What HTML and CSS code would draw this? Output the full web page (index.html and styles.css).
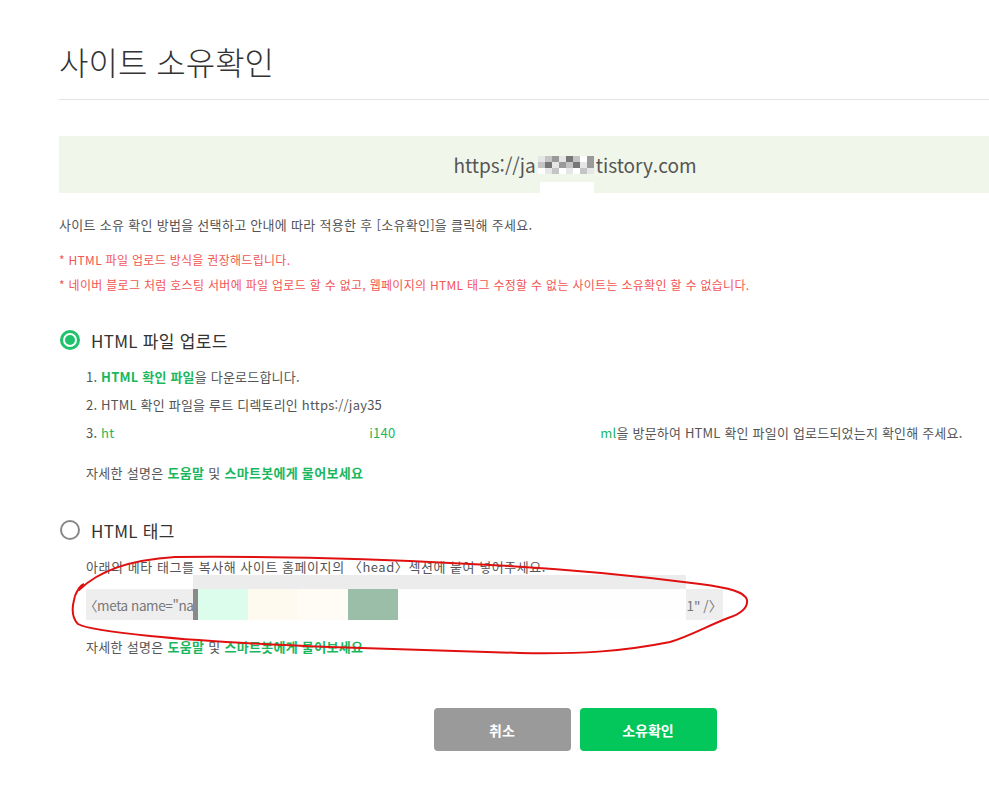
FILE: index.html
```html
<!DOCTYPE html>
<html lang="ko">
<head>
    <meta charset="UTF-8">
    <meta name="viewport" content="width=device-width, initial-scale=1.0">
    <title>사이트 소유확인</title>
    <link rel="stylesheet" href="styles.css">
</head>
<body>
    <div class="page">
        <h1 class="title">사이트 소유확인</h1>

        <div class="site-url">
            https://ja<span class="mosaic">
                <i class="c1"></i><i class="c2"></i><i class="c3"></i><i class="c1"></i><i class="c4"></i><i class="c2"></i><i class="c0"></i><i class="c3"></i>
                <i class="c2"></i><i class="c4"></i><i class="c1"></i><i class="c3"></i><i class="c2"></i><i class="c4"></i><i class="c1"></i><i class="c3"></i>
                <i class="c0"></i><i class="c1"></i><i class="c2"></i><i class="c0"></i><i class="c1"></i><i class="c0"></i><i class="c2"></i><i class="c1"></i>
            </span>tistory.com
        </div>

        <p class="guide">사이트 소유 확인 방법을 선택하고 안내에 따라 적용한 후 [소유확인]을 클릭해 주세요.</p>
        <div class="warn">
            <p>* HTML 파일 업로드 방식을 권장해드립니다.</p>
            <p>* 네이버 블로그 처럼 호스팅 서버에 파일 업로드 할 수 없고, 웹페이지의 HTML 태그 수정할 수 없는 사이트는 소유확인 할 수 없습니다.</p>
        </div>

        <div class="method">
            <label class="radio checked"><span class="dot"></span>HTML 파일 업로드</label>
            <ol class="steps">
                <li>1. <b>HTML 확인 파일</b>을 다운로드합니다.</li>
                <li>2. HTML 확인 파일을 루트 디렉토리인 https://jay35</li>
                <li>3. <em>ht</em><span class="blank w1"></span><em>i140</em><span class="blank w2"></span><em>ml</em>을 방문하여 HTML 확인 파일이 업로드되었는지 확인해 주세요.</li>
            </ol>
            <p class="help">자세한 설명은 <b>도움말</b> 및 <b>스마트봇에게 물어보세요</b></p>
        </div>

        <div class="method second">
            <label class="radio"><span class="dot"></span>HTML 태그</label>
            <p class="desc">아래의 메타 태그를 복사해 사이트 홈페이지의 〈head〉섹션에 붙여 넣어주세요.</p>
            <div class="meta-box">
                <span class="meta-start">〈meta name="na</span>
                <span class="hidden-part">
                    <i class="bar"></i><i class="mint"></i><i class="cream"></i><i class="cream2"></i><i class="sage"></i>
                </span>
                <span>1" /〉</span>
            </div>
            <p class="help">자세한 설명은 <b>도움말</b> 및 <b>스마트봇에게 물어보세요</b></p>
        </div>

        <div class="btns">
            <button class="btn cancel">취소</button>
            <button class="btn ok">소유확인</button>
        </div>

        <!-- red marker circled on the screenshot -->
        <svg class="marker" width="989" height="791" viewBox="0 0 989 791">
            <path d="M84 584 C 80 586, 77 590, 79 590 C 100 570, 130 560, 175 557 C 300 556, 400 560, 470 564 C 560 568, 640 576, 700 584 C 730 588, 745 592, 747 600 C 748 608, 740 614, 728 618 C 705 627, 690 636, 670 642 C 620 652, 580 654, 520 653 C 440 651, 380 648, 330 647 C 250 644, 190 640, 150 636 C 110 632, 85 628, 78 624 C 72 618, 72 608, 74 600 C 75 594, 77 589, 84 584" fill="none" stroke="#e01010" stroke-width="2"/>
        </svg>
    </div>
</body>
</html>
```

FILE: styles.css
```css
body {
    margin: 0;
    padding: 0;
    background: #fff;
    font-family: "Noto Sans CJK KR", "Noto Sans", sans-serif;
    color: #555;
    overflow: hidden;
}
.page {
    position: relative;
    margin-left: 59px;
    width: 1032px;
}
p {
    margin: 0;
}
.title {
    margin: 0;
    padding: 41px 0 18px;
    line-height: 40px;
    font-size: 32px;
    font-weight: 300;
    color: #333;
    letter-spacing: 0;
    border-bottom: 1px solid #e2e2e2;
}
.site-url {
    margin-top: 36px;
    height: 57px;
    background: #f1f6ea;
    display: flex;
    align-items: center;
    justify-content: center;
    font-size: 19px;
    color: #555;
}
.mosaic {
    position: relative;
    display: grid;
    grid-template-columns: repeat(8, 7px);
    grid-auto-rows: 6px;
    margin: 0 2px;
}
.mosaic::after {
    content: "";
    position: absolute;
    left: 2px;
    right: 0;
    top: 26px;
    height: 14px;
    background: #fff;
}
.mosaic i { display: block; }
.mosaic .c0 { background: #fff; }
.mosaic .c1 { background: #e6e6e6; }
.mosaic .c2 { background: #c4c4c4; }
.mosaic .c3 { background: #9a9a9a; }
.mosaic .c4 { background: #777; }
.guide {
    margin-top: 22px;
    line-height: 20px;
    font-size: 13px;
    letter-spacing: 0.3px;
}
.warn {
    margin-top: 12px;
    color: #f25555;
    font-size: 12px;
    letter-spacing: 0.3px;
}
.warn p {
    line-height: 25px;
}
.method {
    margin-top: 31px;
}
.method.second {
    margin-top: 35px;
}
.radio {
    display: flex;
    align-items: center;
    height: 24px;
    font-size: 17px;
    color: #333;
    letter-spacing: 0.3px;
}
.radio .dot {
    box-sizing: border-box;
    width: 20px;
    height: 20px;
    margin: 0 11px 0 1px;
    border: 2px solid #888;
    border-radius: 50%;
    display: flex;
    align-items: center;
    justify-content: center;
}
.radio.checked .dot {
    border: 3px solid #1ec26a;
}
.radio.checked .dot::after {
    content: "";
    width: 10px;
    height: 10px;
    border-radius: 50%;
    background: #1ec26a;
}
.steps {
    list-style: none;
    margin: 11px 0 0;
    padding: 0 0 0 27px;
    font-size: 13px;
    letter-spacing: 0.2px;
}
.steps li {
    line-height: 28px;
}
.steps b, .steps em, .help b {
    color: #1ab75e;
    font-style: normal;
}
.steps b, .help b {
    font-weight: 700;
}
.blank {
    display: inline-block;
}
.blank.w1 { width: 255px; }
.blank.w2 { width: 205px; }
.help {
    margin-top: 16px;
    padding-left: 27px;
    line-height: 20px;
    font-size: 13px;
    letter-spacing: 0.3px;
}
.second .help {
    margin-top: 17px;
}
.desc {
    margin-top: 15px;
    padding-left: 27px;
    line-height: 20px;
    font-size: 13px;
    letter-spacing: 0.55px;
}
.meta-box {
    margin: 12px 0 0 27px;
    width: 637px;
    height: 31px;
    box-sizing: border-box;
    padding: 0 5px 0 0;
    background: #eee;
    display: flex;
    align-items: center;
    font-size: 13.5px;
    color: #777;
    white-space: nowrap;
}
.meta-start {
    flex: 0 0 109px;
    margin-left: -2px;
    letter-spacing: -0.4px;
}
.hidden-part {
    position: relative;
    align-self: stretch;
    flex: 0 0 493px;
    display: flex;
    background: #fefefe;
}
.hidden-part::before {
    content: "";
    position: absolute;
    left: 0;
    right: 0;
    top: -14px;
    height: 14px;
    background: #ececec;
}
.hidden-part i { display: block; height: 100%; }
.hidden-part .bar { width: 5px; background: #8a8a8a; }
.hidden-part .mint { width: 50px; background: #dcfcec; }
.hidden-part .cream { width: 50px; background: #fffaf0; }
.hidden-part .cream2 { width: 50px; background: #fffcf6; }
.hidden-part .sage { width: 50px; background: #9bbea8; }
.btns {
    margin-top: 51px;
    display: flex;
    justify-content: center;
    gap: 9px;
}
.btn {
    width: 137px;
    height: 43px;
    border: none;
    border-radius: 4px;
    color: #fff;
    font-family: inherit;
    font-size: 14px;
    font-weight: 700;
}
.btn.cancel {
    background: #9a9a9a;
}
.btn.ok {
    background: #03c75a;
}
.marker {
    position: absolute;
    left: -59px;
    top: 0;
    pointer-events: none;
}
```
